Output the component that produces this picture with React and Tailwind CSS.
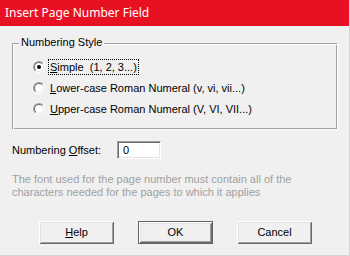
import React from "react";

function Radio({ checked }) {
  return (
    <div className="w-[12px] h-[12px] rounded-full border border-t-[#a0a0a0] border-l-[#a0a0a0] border-b-white border-r-white flex items-center justify-center">
      <div className="w-[10px] h-[10px] rounded-full bg-white border border-t-[#696969] border-l-[#696969] border-b-[#e3e3e3] border-r-[#e3e3e3] flex items-center justify-center">
        {checked && <div className="w-[4px] h-[4px] rounded-full bg-black" />}
      </div>
    </div>
  );
}

function Btn({ children, def }) {
  return (
    <div
      className={
        "w-[75px] h-[23px] flex items-center justify-center bg-[#f0f0f0] " +
        (def
          ? "border border-[#646464] shadow-[inset_1px_1px_0_#fff,inset_-1px_-1px_0_#696969,inset_2px_2px_0_#e3e3e3,inset_-2px_-2px_0_#a0a0a0]"
          : "shadow-[inset_1px_1px_0_#fff,inset_-1px_-1px_0_#696969,inset_2px_2px_0_#e3e3e3,inset_-2px_-2px_0_#a0a0a0]")
      }
    >
      {children}
    </div>
  );
}

export default function App() {
  return (
    <div className="w-[350px] h-[256px] bg-[#f0f0f0] flex flex-col font-['Liberation_Sans',sans-serif] text-[11px] text-black border-r border-b border-[#d4d4d4] overflow-hidden">
      <div className="h-[26px] shrink-0 bg-[#e81123] text-white text-[12px] font-['Noto_Sans',sans-serif] pl-[5px] flex items-center">
        Insert Page Number Field
      </div>
      <div className="flex flex-col pl-[12px]">
        <div className="relative mt-[17px] w-[326px] h-[87px] border border-t-[#a0a0a0] border-l-[#a0a0a0] border-b-white border-r-white shadow-[inset_1px_1px_0_#fff,inset_-1px_-1px_0_#a0a0a0]">
          <div className="absolute left-[6px] top-[-8px] px-[2px] bg-[#f0f0f0] leading-[13px]">
            Numbering Style
          </div>
          <div className="flex flex-col pt-[12px] pl-[20px]">
            <div className="h-[21px] flex items-center">
              <Radio checked />
              <div className="ml-[4px] px-[1px] leading-[14px] outline-1 outline-dotted outline-black whitespace-pre">
                <u>S</u>imple  (1, 2, 3...)
              </div>
            </div>
            <div className="h-[21px] flex items-center">
              <Radio />
              <div className="ml-[5px] leading-[14px]">
                <u>L</u>ower-case Roman Numeral (v, vi, vii...)
              </div>
            </div>
            <div className="h-[21px] flex items-center">
              <Radio />
              <div className="ml-[5px] leading-[14px]">
                <u>U</u>pper-case Roman Numeral (V, VI, VII...)
              </div>
            </div>
          </div>
        </div>
        <div className="mt-[11px] flex items-center h-[18px]">
          <div className="w-[105px]">
            Numbering <u>O</u>ffset:
          </div>
          <div className="w-[44px] h-[18px] bg-white border border-t-[#a0a0a0] border-l-[#a0a0a0] border-b-white border-r-white shadow-[inset_1px_1px_0_#696969,inset_-1px_-1px_0_#e3e3e3] flex items-center pl-[5px]">
            0
          </div>
        </div>
        <div className="mt-[14px] text-[#a0a0a0] leading-[13px]">
          <div>The font used for the page number must contain all of the</div>
          <div>characters needed for the pages to which it applies</div>
        </div>
        <div className="mt-[22px] flex pl-[27px] gap-[24px]">
          <Btn>
            <u>H</u>elp
          </Btn>
          <Btn def>OK</Btn>
          <Btn>Cancel</Btn>
        </div>
      </div>
    </div>
  );
}
